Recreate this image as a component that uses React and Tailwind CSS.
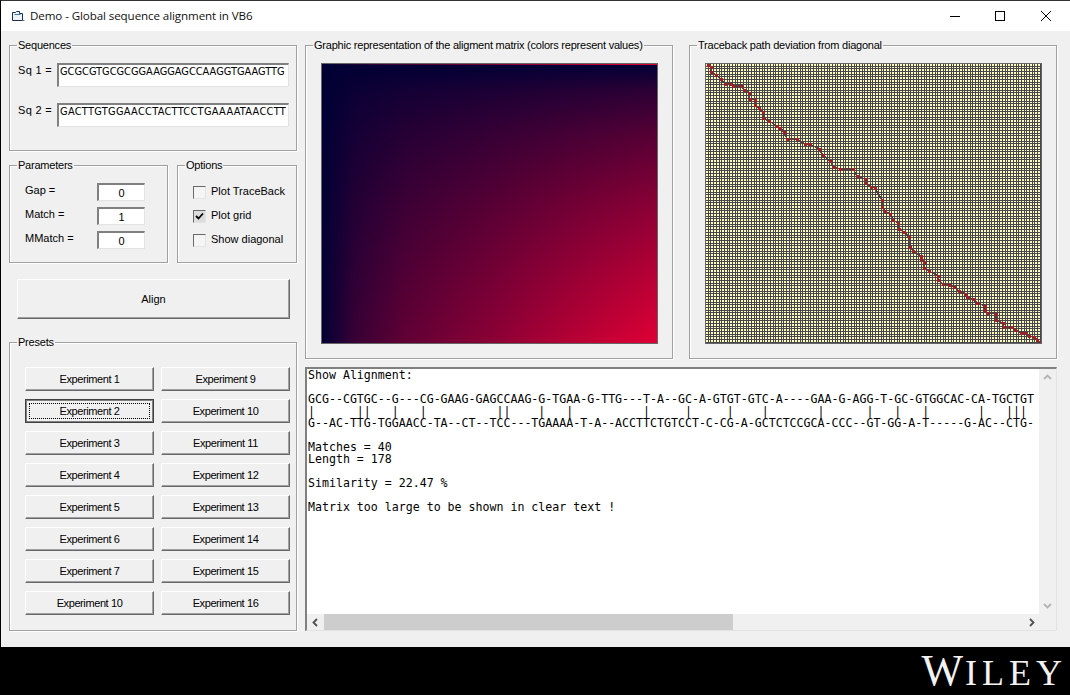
import React from 'react';

const leftPresets = ['Experiment 1', 'Experiment 2', 'Experiment 3', 'Experiment 4', 'Experiment 5', 'Experiment 6', 'Experiment 7', 'Experiment 10'];
const rightPresets = ['Experiment 9', 'Experiment 10', 'Experiment 11', 'Experiment 12', 'Experiment 13', 'Experiment 14', 'Experiment 15', 'Experiment 16'];

const barCols = [0, 7, 8, 12, 16, 27, 28, 33, 37, 48, 54, 60, 65, 73, 80, 84, 88, 96, 100, 101, 102];
const bars = Array.from({ length: 103 }, (_, i) => (barCols.includes(i) ? '|' : ' ')).join('');

const alignment = [
  'Show Alignment:',
  '',
  'GCG--CGTGC--G---CG-GAAG-GAGCCAAG-G-TGAA-G-TTG---T-A--GC-A-GTGT-GTC-A----GAA-G-AGG-T-GC-GTGGCAC-CA-TGCTGT',
  bars,
  'G--AC-TTG-TGGAACC-TA--CT--TCC---TGAAAA-T-A--ACCTTCTGTCCT-C-CG-A-GCTCTCCGCA-CCC--GT-GG-A-T-----G-AC--CTG-',
  '',
  'Matches = 40',
  'Length = 178',
  '',
  'Similarity = 22.47 %',
  '',
  'Matrix too large to be shown in clear text !',
].join('\n');

// traceback points, page coordinates
const tracePoints = [
  [708, 65], [711, 67], [711, 72], [716, 75], [721, 79], [725, 84], [731, 84], [733, 86], [741, 86], [744, 90], [749, 93], [750, 99],
  [755, 100], [755, 105], [759, 108], [763, 112], [763, 118], [769, 121], [777, 126], [780, 128], [784, 132], [787, 139],
  [797, 139], [805, 144], [810, 144], [819, 149], [823, 155], [830, 161], [834, 167], [840, 169], [853, 169], [857, 176],
  [865, 179], [866, 183], [871, 187], [875, 188], [882, 200], [882, 207], [885, 211], [890, 214], [893, 220], [898, 223],
  [899, 229], [904, 232], [909, 237], [910, 247], [913, 251], [921, 256], [921, 259], [924, 262], [924, 268], [929, 271],
  [938, 276], [938, 280], [943, 284], [949, 285], [954, 287], [959, 291], [965, 294], [967, 297], [973, 299], [977, 303],
  [985, 306], [985, 310], [987, 313], [996, 314], [996, 320], [1003, 323], [1004, 327], [1012, 327], [1015, 330], [1021, 333],
  [1026, 333], [1029, 336], [1034, 337], [1037, 340], [1041, 343],
].map(([x, y]) => [x - 705, y - 63]);

const GroupBox = ({ title, className, children }) => (
  <fieldset className={`border border-[#a0a0a0] shadow-[1px_1px_0_#fff,inset_1px_1px_0_#fff] ${className}`}>
    <legend className="ml-[7px] pl-[1px] pr-[1px] leading-3 tracking-[-0.22px]">{title}</legend>
    {children}
  </fieldset>
);

const Sunken = ({ className, children }) => (
  <div className={`bg-white border-t-2 border-l-2 border-t-[#808080] border-l-[#808080] border-r border-b border-r-[#e3e3e3] border-b-[#e3e3e3] ${className}`}>
    {children}
  </div>
);

const Button = ({ label, focused, className = 'w-[129px] h-6 tracking-[-0.4px]' }) =>
  focused ? (
    <button className={`${className} bg-[#f0f0f0] border border-[#404040] shadow-[inset_-1px_-1px_0_#808080,inset_1px_1px_0_#808080] p-[3px]`}>
      <span className="flex items-center justify-center h-full border border-dotted border-black">{label}</span>
    </button>
  ) : (
    <button className={`${className} bg-[#f0f0f0] border-t border-l border-t-white border-l-white border-r border-b border-r-[#696969] border-b-[#696969] shadow-[inset_-1px_-1px_0_#a0a0a0]`}>
      {label}
    </button>
  );

const Param = ({ label, value }) => (
  <div className="flex items-center h-[18px]">
    <span className="w-[72px] -mt-[3px]">{label}</span>
    <Sunken className="w-12 h-[18px] text-center leading-[17px]">{value}</Sunken>
  </div>
);

const Option = ({ label, checked }) => (
  <div className="flex items-center h-[13px] gap-[5px]">
    <span className={`w-[13px] h-[13px] border-t border-l border-t-[#696969] border-l-[#696969] border-r border-b border-r-[#e3e3e3] border-b-[#e3e3e3] ${checked ? 'bg-[#dcdcdc]' : 'bg-[#f4f4f4]'}`}>
      {checked && (
        <svg width="11" height="11" viewBox="0 0 11 11" fill="none">
          <path d="M2 5l2.5 2.5L9 2.5" stroke="#000" strokeWidth="1.8" />
        </svg>
      )}
    </span>
    <span className="whitespace-nowrap -mt-[2px]">{label}</span>
  </div>
);

const SeqRow = ({ label, value, spacing }) => (
  <div className="flex items-start">
    <span className="w-[39px] leading-[14px] tracking-[0.3px]">{label}</span>
    <Sunken className={`w-[232px] h-6 overflow-hidden whitespace-nowrap pl-[1px] leading-[14px] font-['DejaVu_Sans_Condensed','Liberation_Sans',sans-serif] text-[10.9px] ${spacing}`}>{value}</Sunken>
  </div>
);

const Chevron = ({ d, color }) => (
  <svg width="9" height="9" viewBox="0 0 9 9" fill="none">
    <path d={d} stroke={color} strokeWidth="1.8" />
  </svg>
);

const MatrixPlot = () => (
  <svg width="337" height="281" className="block">
    <defs>
      <linearGradient id="gx">
        <stop offset="0" stopColor="#e00035" stopOpacity="0" />
        <stop offset="0.1" stopColor="#e00035" stopOpacity="0.25" />
        <stop offset="0.25" stopColor="#e00035" stopOpacity="0.435" />
        <stop offset="0.5" stopColor="#e00035" stopOpacity="0.62" />
        <stop offset="0.75" stopColor="#e00035" stopOpacity="0.82" />
        <stop offset="1" stopColor="#e00035" />
      </linearGradient>
      <linearGradient id="gy" x1="0" y1="0" x2="0" y2="1">
        <stop offset="0" stopColor="#000" />
        <stop offset="0.1" stopColor="#333" />
        <stop offset="0.25" stopColor="#616161" />
        <stop offset="0.5" stopColor="#9d9d9d" />
        <stop offset="0.75" stopColor="#d1d1d1" />
        <stop offset="1" stopColor="#fff" />
      </linearGradient>
      <mask id="my">
        <rect width="337" height="281" fill="url(#gy)" />
      </mask>
      <linearGradient id="gtop">
        <stop offset="0" stopColor="#000035" />
        <stop offset="0.2" stopColor="#3a0035" />
        <stop offset="0.6" stopColor="#900035" />
        <stop offset="1" stopColor="#e00035" />
      </linearGradient>
    </defs>
    <rect width="337" height="281" fill="#000035" />
    <rect width="337" height="281" fill="url(#gx)" mask="url(#my)" />
    <rect width="337" height="2" fill="url(#gtop)" />
    <rect x="0.5" y="0.5" width="336" height="280" fill="none" stroke="#666" />
  </svg>
);

const TracePlot = () => (
  <svg width="337" height="281" className="block" shapeRendering="crispEdges">
    <rect width="337" height="281" fill="#ffffc4" />
    {Array.from({ length: 125 }, (_, i) => (
      <rect key={i} x={Math.round(i * 2.7)} y="0" width="1" height="281" fill="#45454a" />
    ))}
    {Array.from({ length: 105 }, (_, i) => (
      <rect key={i} x="0" y={Math.round(i * 2.68)} width="337" height="1" fill="#45454a" />
    ))}
    <polyline points={tracePoints.map((p) => p.join(',')).join(' ')} fill="none" stroke="#5a3a40" strokeWidth="1.5" />
    {tracePoints.map(([x, y], i) => (
      <rect key={i} x={x - 1} y={y - 1} width="3" height="3" fill="#a81c22" />
    ))}
    <rect x="0.5" y="0.5" width="336" height="280" fill="none" stroke="#666" />
  </svg>
);

export default function App() {
  return (
    <div className="w-[1070px] h-[695px] overflow-hidden flex flex-col bg-black text-black font-['Liberation_Sans',Arial,sans-serif] text-[11px]">
      {/* Title bar */}
      <div className="h-[31px] bg-white border-t border-l border-t-[#333] border-l-black flex items-center">
        <svg width="14" height="13" viewBox="0 0 14 13" fill="none" className="ml-[10px]">
          <path d="M1.5 2.5h3l1-1h3v2h3v7h-10z" fill="#eef3f8" stroke="#1d2f4a" />
          <path d="M3.5 4.5h6" stroke="#3a78b8" />
          <path d="M11.5 10.5h2" stroke="#777" />
        </svg>
        <span className="ml-[5px] text-[11.6px] font-['Open_Sans',sans-serif] text-[#111] tracking-[-0.1px]">Demo - Global sequence alignment in VB6</span>
        <div className="ml-auto -mt-[1px] flex items-center">
          <svg width="12" height="12" viewBox="0 0 12 12" className="mr-[33px]"><path d="M1 6.5h10" stroke="#000" /></svg>
          <svg width="12" height="12" viewBox="0 0 12 12" fill="none" className="mr-[34px]"><rect x="1.5" y="1.5" width="9" height="9" stroke="#000" /></svg>
          <svg width="12" height="12" viewBox="0 0 12 12" fill="none" className="mr-[18px]"><path d="M1 1l10 10M11 1L1 11" stroke="#000" /></svg>
        </div>
      </div>

      {/* Client area */}
      <div className="h-[616px] bg-[#f0f0f0] border-l border-l-black flex pt-2 pl-2 gap-2">
        <div className="w-[288px] flex flex-col">
          <GroupBox title="Sequences" className="h-[112px]">
            <div className="pl-2 pr-[7px] pt-3 flex flex-col gap-4">
              <SeqRow label="Sq 1 =" value="GCGCGTGCGCGGAAGGAGCCAAGGTGAAGTTG" />
              <SeqRow label="Sq 2 =" value="GACTTGTGGAACCTACTTCCTGAAAATAACCTT" spacing="tracking-[0.3px]" />
            </div>
          </GroupBox>

          <div className="flex gap-[9px] mt-2">
            <GroupBox title="Parameters" className="w-[159px] h-[104px]">
              <div className="pl-[15px] pt-3 flex flex-col gap-1.5">
                <Param label="Gap =" value="0" />
                <Param label="Match =" value="1" />
                <Param label="MMatch =" value="0" />
              </div>
            </GroupBox>
            <GroupBox title="Options" className="w-[120px] h-[104px]">
              <div className="pl-[15px] pt-[15px] flex flex-col gap-[11px]">
                <Option label="Plot TraceBack" />
                <Option label="Plot grid" checked />
                <Option label="Show diagonal" />
              </div>
            </GroupBox>
          </div>

          <div className="ml-2 mt-4">
            <Button label="Align" className="w-[273px] h-10" />
          </div>

          <GroupBox title="Presets" className="h-[295px] mt-[17px]">
            <div className="pl-[15px] pt-[19px] flex gap-[7px]">
              <div className="flex flex-col gap-2">
                {leftPresets.map((label) => (
                  <Button key={label} label={label} focused={label === 'Experiment 2'} />
                ))}
              </div>
              <div className="flex flex-col gap-2">
                {rightPresets.map((label) => (
                  <Button key={label} label={label} />
                ))}
              </div>
            </div>
          </GroupBox>
        </div>

        <div className="w-[752px] flex flex-col">
          <div className="flex gap-4">
            <GroupBox title="Graphic representation of the aligment matrix (colors represent values)" className="w-[368px] h-[320px]">
              <div className="pl-[15px] pt-3">
                <MatrixPlot />
              </div>
            </GroupBox>
            <GroupBox title="Traceback path deviation from diagonal" className="w-[368px] h-[320px]">
              <div className="pl-[15px] pt-3">
                <TracePlot />
              </div>
            </GroupBox>
          </div>

          {/* Output text box */}
          <Sunken className="mt-2 w-[752px] h-[264px] flex flex-col">
            <div className="flex h-[245px]">
              <pre className="w-[733px] overflow-hidden pl-[1px] font-['DejaVu_Sans_Mono',monospace] text-[11.6px] leading-3">{alignment}</pre>
              <div className="w-[17px] bg-[#f0f0f0] flex flex-col items-center justify-between py-1">
                <Chevron d="M1 6l3.5-3.5L8 6" color="#b4b4b4" />
                <Chevron d="M1 3l3.5 3.5L8 3" color="#b4b4b4" />
              </div>
            </div>
            <div className="h-[16px] bg-[#f0f0f0] flex items-center">
              <div className="w-[17px] flex justify-center">
                <Chevron d="M6 1L2.5 4.5 6 8" color="#505050" />
              </div>
              <div className="w-[409px] h-full bg-[#cdcdcd]" />
              <div className="ml-[290px] w-[17px] flex justify-center">
                <Chevron d="M3 1l3.5 3.5L3 8" color="#505050" />
              </div>
            </div>
          </Sunken>
        </div>
      </div>

      {/* Footer */}
      <div className="h-12 pt-[2px] flex justify-end items-baseline pr-[6px] font-['Liberation_Serif',serif] text-[#f2f2f2]">
        <span className="text-[44px] leading-[44px] mr-[2px]">W</span>
        <span className="text-[36px] leading-[44px] tracking-[5px] -mr-[3px]">ILEY</span>
      </div>
    </div>
  );
}
